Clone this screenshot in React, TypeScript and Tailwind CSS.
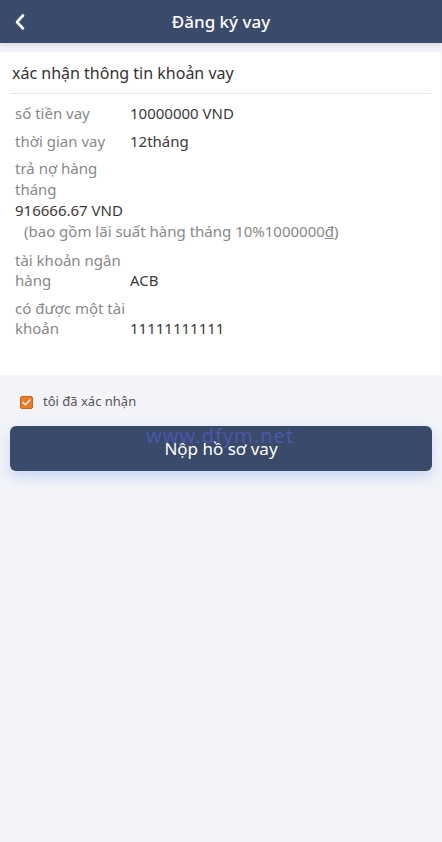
import React from 'react';

const rows: { label: string; value: string }[] = [
  { label: 'số tiền vay', value: '10000000 VND' },
  { label: 'thời gian vay', value: '12tháng' },
];

export default function App() {
  return (
    <div
      className="min-h-[842px] bg-[#f3f4f9] text-[#3a3a3a]"
      style={{ fontFamily: '"Noto Sans", "Open Sans", sans-serif' }}
    >
      <header className="relative z-10 h-[43px] bg-[#394a6b] flex items-center justify-center shadow-[0_2px_6px_rgba(0,0,0,0.12)]">
        <button className="absolute left-[14px] top-0 h-full flex items-center text-white">
          <svg width="12" height="18" viewBox="0 0 12 18" fill="none">
            <path d="M9 2.5 3 9l6 6.5" stroke="white" strokeWidth="2.6" strokeLinecap="round" strokeLinejoin="round" />
          </svg>
        </button>
        <h1 className="text-white text-[17px] font-medium">Đăng ký vay</h1>
      </header>

      <section className="mt-[9px] mr-px bg-white pb-[37px]">
        <div className="mx-[10px] border-b border-[#e6e6e6] pt-[9px] pb-[8px] px-[2px] text-[16px] text-[#333]">
          xác nhận thông tin khoản vay
        </div>
        <div className="px-[15px] text-[15px] leading-[20px]">
          {rows.map((r, i) => (
            <div key={r.label} className={i === 0 ? 'flex mt-[9px]' : 'flex mt-[8px]'}>
              <span className="w-[115px] text-[#888]">{r.label}</span>
              <span>{r.value}</span>
            </div>
          ))}
          <div className="mt-[7px] leading-[21px]">
            <div className="w-[115px] text-[#888]">trả nợ hàng tháng</div>
            <div>916666.67 VND</div>
            <div className="pl-[9px] text-[#888]">
              (bao gồm lãi suất hàng tháng 10%1000000<span className="underline">đ</span>)
            </div>
          </div>
          <div className="flex items-end mt-[8px]">
            <span className="w-[115px] text-[#888]">tài khoản ngân hàng</span>
            <span>ACB</span>
          </div>
          <div className="flex items-end mt-[8px]">
            <span className="w-[115px] text-[#888]">có được một tài khoản</span>
            <span>11111111111</span>
          </div>
        </div>
      </section>

      <label className="flex items-center gap-[10px] pl-[20px] mt-[18px] h-[18px]">
        <span className="w-[13px] h-[13px] rounded-[2px] bg-[#f07a22] border border-[#c9641c] flex items-center justify-center">
          <svg width="9" height="7" viewBox="0 0 9 7" fill="none">
            <path d="M1 3.5 3.3 5.8 8 1" stroke="white" strokeWidth="1.4" strokeLinecap="round" strokeLinejoin="round" />
          </svg>
        </span>
        <span className="text-[13px] text-[#555]">tôi đã xác nhận</span>
      </label>

      <div className="relative px-[10px] mt-[15px]">
        <button className="w-full h-[45px] rounded-[6px] bg-[#394a6b] text-white text-[17px] shadow-[0_6px_14px_rgba(120,160,230,0.35)]">
          Nộp hồ sơ vay
        </button>
        <span className="pointer-events-none absolute left-[146px] -top-[5px] text-[20px] tracking-[1px] text-[#4b56a8]">
          www.dfym.net
        </span>
      </div>
    </div>
  );
}
